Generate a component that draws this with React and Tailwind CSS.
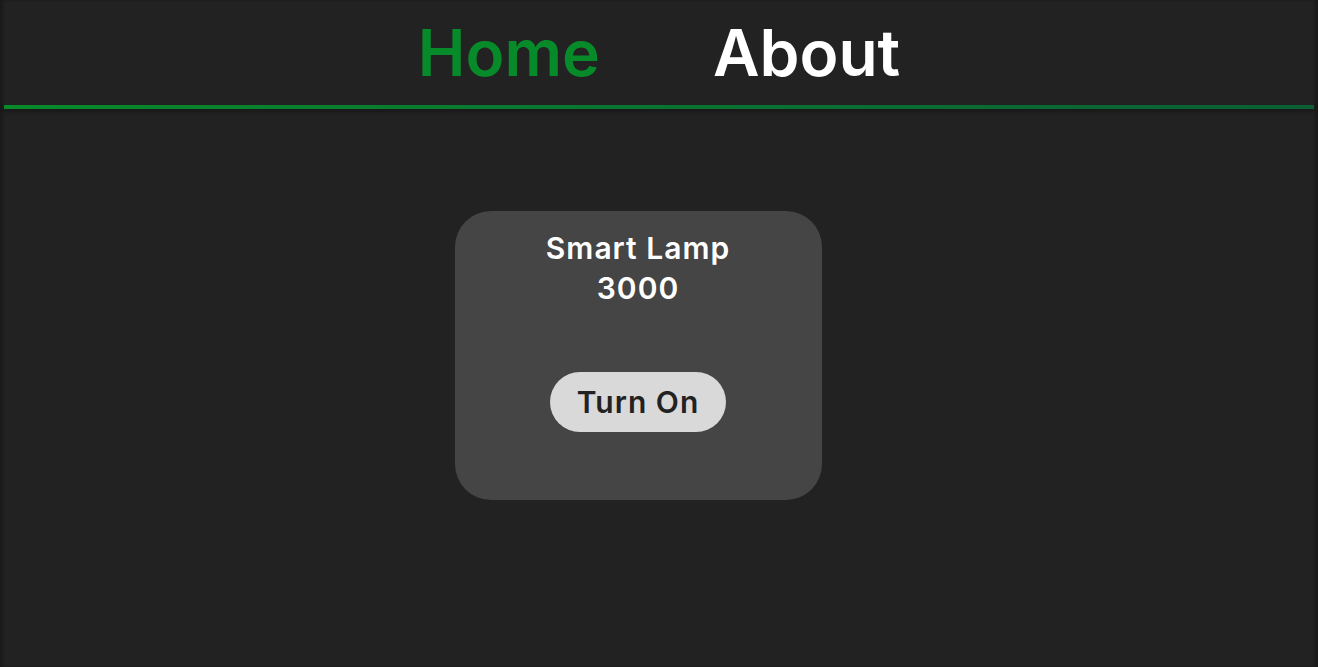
export default function App() {
    return (
        <div
            className="min-h-screen bg-[#222222] px-[4px] shadow-[inset_4px_0_3px_-1px_#1a1a1a,inset_-4px_0_3px_-1px_#1a1a1a]"
            style={{ fontFamily: "Inter, 'Noto Sans', sans-serif" }}
        >
            {/* Top navigation */}
            <nav className="relative">
                <ul className="flex justify-center items-center gap-[113px] h-[105px]">
                    <li className="text-[64px] font-semibold text-[#078a2a] leading-none">Home</li>
                    <li className="text-[64px] font-semibold text-white leading-none">About</li>
                </ul>
                <div className="h-[4px] bg-gradient-to-r from-[#078a2a] to-[#0a6034] shadow-[0_3px_4px_rgba(0,0,0,0.35)]" />
            </nav>

            {/* Device card */}
            <main className="flex justify-center pt-[102px] pr-[42px]">
                <div className="w-[367px] h-[289px] bg-[#454545] rounded-[36px] flex flex-col items-center pt-[17px]">
                    <h2 className="w-[210px] text-center text-white text-[30px] tracking-[1px] font-semibold leading-[40px]">
                        Smart Lamp 3000
                    </h2>
                    <button className="mt-[64px] w-[176px] h-[60px] rounded-full bg-[#d9d9d9] text-[#222222] text-[30px] tracking-[1px] font-semibold">
                        Turn On
                    </button>
                </div>
            </main>
        </div>
    );
}
